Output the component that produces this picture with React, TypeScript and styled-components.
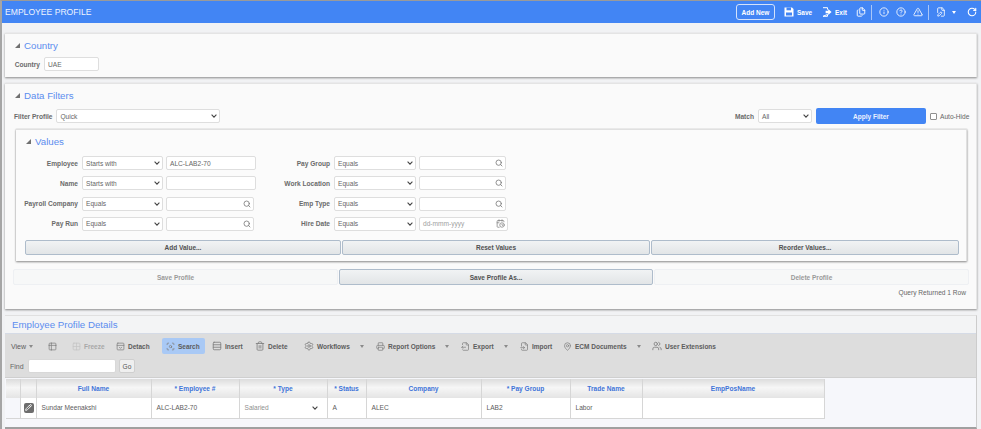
import React from 'react';
import styled, { createGlobalStyle } from 'styled-components';
import {
  Files,
  Info,
  CircleHelp,
  TriangleAlert,
  FilePen,
  RotateCw,
  Search as SearchIcon,
  CalendarClock,
  Pencil,
  Table2,
  Grid2x2,
  PanelTopOpen,
  ScanSearch,
  Rows3,
  Trash2,
  Settings,
  Printer,
  FileOutput,
  FileInput,
  MapPin,
  Users,
} from 'lucide-react';

const GlobalStyle = createGlobalStyle`
  html, body { margin: 0; padding: 0; background: #f1f2f4; }
  body { font-family: "Liberation Sans", Arial, sans-serif; font-size: 6.6px; color: #666; overflow: hidden; }
  * { box-sizing: border-box; }
`;

const Page = styled.div`
  width: 981px;
  height: 429px;
  border-top: 1px solid #9a9a9a;
  border-left: 2px solid #a5a5a5;
  overflow: hidden;
`;

const Header = styled.header`
  height: 22px;
  background: #4285f4;
  display: flex;
  align-items: center;
  padding: 0 4px 0 3px;
  color: #fff;
`;

const AppTitle = styled.div`
  font-size: 8.6px;
  flex: 1;
  color: #eef4ff;
`;

const AddNew = styled.button`
  height: 16px;
  width: 39px;
  padding: 0;
  border: 1px solid #d4e2fb;
  border-radius: 3px;
  background: transparent;
  color: #fff;
  font: bold 6.5px "Liberation Sans", Arial, sans-serif;
  margin-right: 9px;
`;

const HeadAction = styled.div<{ $w: number }>`
  width: ${(p) => p.$w}px;
  display: flex;
  align-items: center;
  gap: 3px;
  font-weight: bold;
  font-size: 6.5px;
  color: #fff;
`;

const HeadSep = styled.div`
  width: 1px;
  height: 15px;
  background: #a9c6f8;
  margin: 0 7px 0 5px;
`;

const HeadCaret = styled.div`
  width: 0;
  height: 0;
  border-left: 2.5px solid transparent;
  border-right: 2.5px solid transparent;
  border-top: 3px solid #fff;
  margin: 0 11px 0 6px;
`;

const Content = styled.div`
  padding: 10px 4px 0 3px;
`;

const Card = styled.section<{ $h: number }>`
  height: ${(p) => p.$h}px;
  margin-bottom: 6px;
  background: #fafafa;
  border-top: 1px solid #e4e4e4;
  border-right: 1px solid #e6e6e6;
  box-shadow: 0 1px 2px #8a8a8a;
  padding: 5px 6px 0 9px;
`;

const SectionHead = styled.div`
  display: flex;
  align-items: center;
  gap: 4px;
  height: 12px;
  padding-left: 1px;
`;

const Collapse = styled.span`
  width: 0;
  height: 0;
  border-bottom: 5px solid #707070;
  border-left: 5px solid transparent;
`;

const SectionTitle = styled.h2`
  margin: 0;
  font-weight: normal;
  font-size: 9.7px;
  color: #5b8def;
`;

const Row = styled.div<{ $mt?: number }>`
  display: flex;
  align-items: center;
  margin-top: ${(p) => p.$mt ?? 0}px;
`;

const Label = styled.label<{ $w?: number }>`
  ${(p) => (p.$w ? `width: ${p.$w}px;` : '')}
  flex: none;
  display: flex;
  justify-content: flex-end;
  white-space: nowrap;
  font-weight: bold;
  color: #6a6a6a;
  margin-right: 4px;
`;

const TextBox = styled.div<{ $w: number; $muted?: boolean; $mr?: number }>`
  width: ${(p) => p.$w}px;
  height: 14px;
  flex: none;
  background: #fff;
  border: 1px solid #dedede;
  border-radius: 2px;
  display: flex;
  align-items: center;
  padding: 0 2px 0 3px;
  margin-right: ${(p) => p.$mr ?? 0}px;
  color: ${(p) => (p.$muted ? '#a0a0a0' : '#666')};
  svg { color: #808080; margin-left: auto; flex: none; }
`;

const Chevron = () => (
  <svg width="6" height="4" viewBox="0 0 6 4">
    <path d="M0.6 0.7 L3 3.1 L5.4 0.7" fill="none" stroke="#444" strokeWidth="1.1" />
  </svg>
);

const FloppyIcon = () => (
  <svg width="10" height="10" viewBox="0 0 10 10">
    <path d="M0.5 0.5 H8 L9.5 2 V9.5 H0.5 Z" fill="#fff" />
    <rect x="2.5" y="0.5" width="4.5" height="2.8" fill="#4285f4" />
    <rect x="2" y="5.5" width="6" height="3" fill="#4285f4" />
  </svg>
);

const DoorIcon = () => (
  <svg width="10" height="10" viewBox="0 0 10 10">
    <path d="M1 0.7 H5.5 V2.6 M5.5 7.4 V9.3 H1 Z" fill="none" stroke="#fff" strokeWidth="1" />
    <path d="M3.6 3.8 H6.2 V2 L9.6 5 L6.2 8 V6.2 H3.6 Z" fill="#fff" />
  </svg>
);

const Select = ({ w, value, mr }: { w: number; value: string; mr?: number }) => (
  <TextBox $w={w} $mr={mr}>
    <span>{value}</span>
    <Chevron />
  </TextBox>
);

const FilterBar = styled(Row)`
  margin-top: 7px;
`;

const Grow = styled.div`
  flex: 1;
`;

const ApplyButton = styled.button`
  width: 110px;
  height: 16px;
  margin: 0 4px;
  padding: 0;
  border: none;
  border-radius: 2px;
  background: #4285f4;
  color: #eaf1ff;
  font: bold 6.5px "Liberation Sans", Arial, sans-serif;
`;

const CheckBox = styled.span`
  width: 7px;
  height: 7px;
  border: 1px solid #8f8f8f;
  border-radius: 1px;
  margin-right: 3px;
  background: #fff;
`;

const AutoHide = styled.span`
  width: 30px;
  white-space: nowrap;
  color: #666;
`;

const ValuesPanel = styled.div`
  height: 132px;
  margin: 5px 3px 0 2px;
  background: #fbfbfb;
  border-top: 1px solid #e0e0e0;
  border-right: 1px solid #e0e0e0;
  box-shadow: 0 1px 2px #8a8a8a, 0 0 1px #bbb;
  padding: 5px 7px 0 9px;
`;

const ValuesGrid = styled.div`
  display: grid;
  grid-template-columns: 243px 1fr;
  row-gap: 6.3px;
  margin-top: 9px;
`;

const ButtonRow = styled.div<{ $cols: string; $mt: number; $ml?: number }>`
  display: grid;
  grid-template-columns: ${(p) => p.$cols};
  gap: 1px;
  margin: ${(p) => p.$mt}px 0 0 ${(p) => p.$ml ?? 0}px;
`;

const ActionButton = styled.button<{ $off?: boolean; $h: number }>`
  height: ${(p) => p.$h}px;
  padding: 0;
  border: 1px solid ${(p) => (p.$off ? '#eef0f3' : '#aebccb')};
  border-radius: 2px;
  background: ${(p) => (p.$off ? '#f7f8f8' : 'linear-gradient(#f1f3f4, #e2e5e7)')};
  color: ${(p) => (p.$off ? '#9a9a9a' : '#505050')};
  font: bold 6.5px "Liberation Sans", Arial, sans-serif;
`;

const QueryStatus = styled.div`
  text-align: right;
  margin: 4px 4px 0 0;
  color: #666;
`;

const DetailsCard = styled.section`
  height: 114px;
  background: #f6f7fb;
  border-top: 1px solid #e0e0e0;
  border-right: 1px solid #ccc;
  border-bottom: 2px solid #a0a0a0;
`;

const DetailsTitle = styled.div`
  height: 17px;
  display: flex;
  align-items: center;
  padding-left: 7px;
  background: #f3f4f5;
`;

const Toolbar = styled.div`
  height: 45px;
  background: #dddddd;
  border-top: 1px solid #d5dbe6;
  border-bottom: 1px solid #cfcfcf;
  padding: 4px 0 0 6px;
`;

const ToolRow = styled.div`
  display: flex;
  align-items: center;
  height: 16px;
`;

const ToolItem = styled.div<{ $w: number; $disabled?: boolean }>`
  display: flex;
  align-items: center;
  gap: 3px;
  flex: none;
  width: ${(p) => p.$w}px;
  height: 16px;
  color: ${(p) => (p.$disabled ? '#a8a8a8' : '#5c5c5c')};
  font-weight: bold;
  font-size: 6.5px;
  white-space: nowrap;
  svg { flex: none; color: ${(p) => (p.$disabled ? '#c4c4c4' : '#808080')}; }
`;

const ActiveTool = styled(ToolItem)`
  padding-left: 4px;
  margin-right: 7px;
  border-radius: 2px;
  background: #a9c9f5;
`;

const ToolCaret = styled.span<{ $ml?: number }>`
  width: 0;
  height: 0;
  margin-left: ${(p) => p.$ml ?? 7}px;
  border-left: 2.5px solid transparent;
  border-right: 2.5px solid transparent;
  border-top: 3px solid #8a8a8a;
`;

const ViewText = styled.span`
  font-weight: normal;
  font-size: 7px;
`;

const FindRow = styled(ToolRow)`
  margin: 4px 0 0 -1px;
`;

const FindLabel = styled.span`
  width: 18px;
  color: #666;
  font-size: 7px;
`;

const FindBox = styled.div`
  width: 88px;
  height: 14px;
  background: #fff;
  border: 1px solid #d8d8d8;
  border-radius: 2px;
  margin-right: 3px;
`;

const GoButton = styled.button`
  width: 16px;
  height: 14px;
  padding: 0;
  background: #efefef;
  border: 1px solid #cfcfcf;
  border-radius: 2px;
  color: #555;
  font: 6.6px "Liberation Sans", Arial, sans-serif;
`;

const Table = styled.table`
  border-collapse: collapse;
  table-layout: fixed;
  width: 818px;
  margin: 1px 0 0 1px;
`;

const Th = styled.th`
  height: 19px;
  padding: 0;
  border-right: 1px solid #d6d6d6;
  background: linear-gradient(#dcdcdc, #f6f6f6 45%, #e4e4e4);
  color: #3f74d8;
  font-size: 6.6px;
  font-weight: bold;
`;

const Td = styled.td<{ $muted?: boolean; $blank?: boolean }>`
  height: 20px;
  padding: 0 5px;
  background: ${(p) => (p.$blank ? '#f6f7fb' : '#fff')};
  border-right: 1px solid #d6d6d6;
  border-bottom: 1px solid #d6d6d6;
  color: ${(p) => (p.$muted ? '#8f8f8f' : '#5c5c5c')};
`;

const CellFlex = styled.div`
  display: flex;
  align-items: center;
  justify-content: space-between;
  padding-right: 4px;
`;

const EditChip = styled.span`
  width: 10px;
  height: 10px;
  border-radius: 2px;
  background: #6d6d6d;
  display: flex;
  align-items: center;
  justify-content: center;
  margin-left: -2px;
  color: #fff;
`;

const filters = [
  ['Employee', 'Starts with', 'ALC-LAB2-70', 'text', 'Pay Group', 'search'],
  ['Name', 'Starts with', '', 'text', 'Work Location', 'search'],
  ['Payroll Company', 'Equals', '', 'search', 'Emp Type', 'search'],
  ['Pay Run', 'Equals', '', 'search', 'Hire Date', 'date'],
];

const columns: [string, number][] = [
  ['', 14],
  ['', 16],
  ['Full Name', 115],
  ['* Employee #', 88],
  ['* Type', 88],
  ['* Status', 39],
  ['Company', 115],
  ['* Pay Group', 89],
  ['Trade Name', 72],
  ['EmpPosName', 182],
];

export default function App() {
  return (
    <Page>
      <GlobalStyle />
      <Header>
        <AppTitle>EMPLOYEE PROFILE</AppTitle>
        <AddNew>Add New</AddNew>
        <HeadAction $w={38}><FloppyIcon />Save</HeadAction>
        <HeadAction $w={34}><DoorIcon />Exit</HeadAction>
        <Files size={10} strokeWidth={2.2} />
        <HeadSep />
        <HeadAction $w={17}><Info size={10} /></HeadAction>
        <HeadAction $w={17}><CircleHelp size={10} /></HeadAction>
        <TriangleAlert size={10} />
        <HeadSep />
        <FilePen size={10} />
        <HeadCaret />
        <RotateCw size={10} strokeWidth={2.6} />
      </Header>
      <Content>
        <Card $h={44}>
          <SectionHead>
            <Collapse />
            <SectionTitle>Country</SectionTitle>
          </SectionHead>
          <Row $mt={6}>
            <Label $w={26}>Country</Label>
            <TextBox $w={55}>UAE</TextBox>
          </Row>
        </Card>
        <Card $h={226}>
          <SectionHead>
            <Collapse />
            <SectionTitle>Data Filters</SectionTitle>
          </SectionHead>
          <FilterBar>
            <Label>Filter Profile</Label>
            <Select w={164} value="Quick" />
            <Grow />
            <Label>Match</Label>
            <Select w={54} value="All" />
            <ApplyButton>Apply Filter</ApplyButton>
            <CheckBox />
            <AutoHide>Auto-Hide</AutoHide>
          </FilterBar>
          <ValuesPanel>
            <SectionHead>
              <Collapse />
              <SectionTitle>Values</SectionTitle>
            </SectionHead>
            <ValuesGrid>
              {filters.map(([l1, op1, v1, k1, l2, k2]) => (
                <React.Fragment key={l1}>
                  <Row>
                    <Label $w={53}>{l1}</Label>
                    <Select w={81} value={op1} mr={3} />
                    <TextBox $w={k1 === 'search' ? 88 : 90}>
                      {v1}
                      {k1 === 'search' && <SearchIcon size={8} strokeWidth={2.6} />}
                    </TextBox>
                  </Row>
                  <Row>
                    <Label $w={62}>{l2}</Label>
                    <Select w={82} value="Equals" mr={3} />
                    {k2 === 'date' ? (
                      <TextBox $w={89} $muted>
                        dd-mmm-yyyy
                        <CalendarClock size={9} />
                      </TextBox>
                    ) : (
                      <TextBox $w={87}>
                        <SearchIcon size={8} strokeWidth={2.6} />
                      </TextBox>
                    )}
                  </Row>
                </React.Fragment>
              ))}
            </ValuesGrid>
            <ButtonRow $cols="316px 308px 308px" $mt={9}>
              <ActionButton $h={15}>Add Value...</ActionButton>
              <ActionButton $h={15}>Reset Values</ActionButton>
              <ActionButton $h={15}>Reorder Values...</ActionButton>
            </ButtonRow>
          </ValuesPanel>
          <ButtonRow $cols="325px 314px 315px" $mt={8} $ml={-1}>
            <ActionButton $h={16} $off>Save Profile</ActionButton>
            <ActionButton $h={16}>Save Profile As...</ActionButton>
            <ActionButton $h={16} $off>Delete Profile</ActionButton>
          </ButtonRow>
          <QueryStatus>Query Returned 1 Row</QueryStatus>
        </Card>
        <DetailsCard>
          <DetailsTitle>
            <SectionTitle>Employee Profile Details</SectionTitle>
          </DetailsTitle>
          <Toolbar>
            <ToolRow>
              <ToolItem $w={37}><ViewText>View</ViewText><ToolCaret $ml={0} /></ToolItem>
              <ToolItem $w={24}><Table2 size={9} /></ToolItem>
              <ToolItem $w={44} $disabled><Grid2x2 size={9} />Freeze</ToolItem>
              <ToolItem $w={46}><PanelTopOpen size={9} />Detach</ToolItem>
              <ActiveTool $w={43}><ScanSearch size={9} />Search</ActiveTool>
              <ToolItem $w={43}><Rows3 size={10} />Insert</ToolItem>
              <ToolItem $w={49}><Trash2 size={10} />Delete</ToolItem>
              <ToolItem $w={72}><Settings size={10} />Workflows<ToolCaret /></ToolItem>
              <ToolItem $w={85}><Printer size={9} />Report Options<ToolCaret /></ToolItem>
              <ToolItem $w={59}><FileOutput size={9} />Export<ToolCaret /></ToolItem>
              <ToolItem $w={43}><FileInput size={9} />Import</ToolItem>
              <ToolItem $w={89}><MapPin size={9} />ECM Documents<ToolCaret /></ToolItem>
              <ToolItem $w={70}><Users size={10} />User Extensions</ToolItem>
            </ToolRow>
            <FindRow>
              <FindLabel>Find</FindLabel>
              <FindBox />
              <GoButton>Go</GoButton>
            </FindRow>
          </Toolbar>
          <Table>
            <colgroup>
              {columns.map(([, w], i) => (
                <col key={i} width={w} />
              ))}
            </colgroup>
            <thead>
              <tr>
                {columns.map(([name], i) => (
                  <Th key={i}>{name}</Th>
                ))}
              </tr>
            </thead>
            <tbody>
              <tr>
                <Td $blank />
                <Td><EditChip><Pencil size={7} strokeWidth={3} /></EditChip></Td>
                <Td>Sundar Meenakshi</Td>
                <Td>ALC-LAB2-70</Td>
                <Td $muted><CellFlex>Salaried<Chevron /></CellFlex></Td>
                <Td>A</Td>
                <Td>ALEC</Td>
                <Td>LAB2</Td>
                <Td>Labor</Td>
                <Td />
              </tr>
            </tbody>
          </Table>
        </DetailsCard>
      </Content>
    </Page>
  );
}
